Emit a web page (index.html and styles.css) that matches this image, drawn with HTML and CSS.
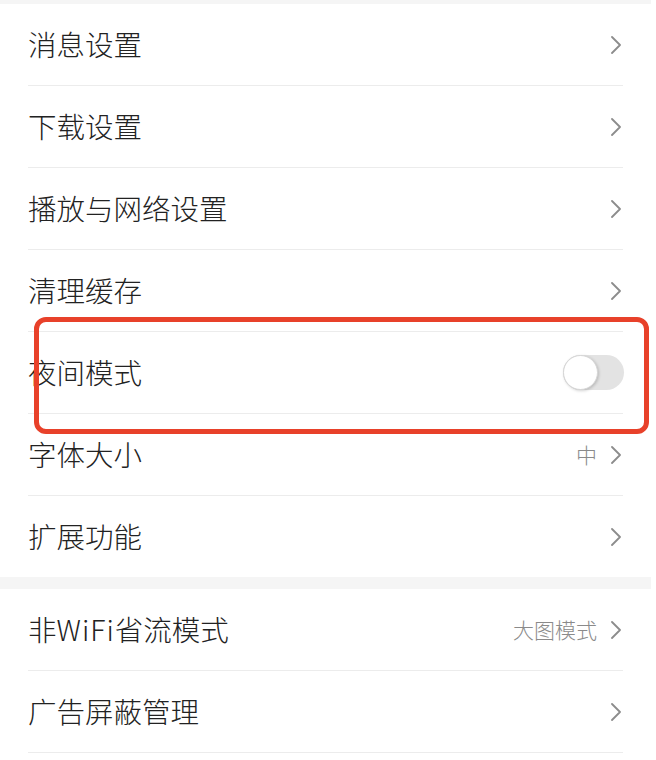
FILE: index.html
```html
<!DOCTYPE html>
<html lang="zh-CN">
<head>
<meta charset="utf-8">
<title>设置</title>
<link rel="stylesheet" href="styles.css">
</head>
<body>
<div class="page">
  <div class="gap gap-top"></div>
  <section class="group">
    <div class="row"><span class="label">消息设置</span><span class="right"><svg class="chev" viewBox="0 0 10 18"><path d="M1 1 L9 9 L1 17"/></svg></span></div>
    <div class="row"><span class="label">下载设置</span><span class="right"><svg class="chev" viewBox="0 0 10 18"><path d="M1 1 L9 9 L1 17"/></svg></span></div>
    <div class="row"><span class="label">播放与网络设置</span><span class="right"><svg class="chev" viewBox="0 0 10 18"><path d="M1 1 L9 9 L1 17"/></svg></span></div>
    <div class="row"><span class="label">清理缓存</span><span class="right"><svg class="chev" viewBox="0 0 10 18"><path d="M1 1 L9 9 L1 17"/></svg></span></div>
    <div class="row"><span class="label">夜间模式</span><span class="right"><span class="toggle"><span class="knob"></span></span></span><div class="highlight"></div></div>
    <div class="row"><span class="label">字体大小</span><span class="right"><span class="value">中</span><svg class="chev" viewBox="0 0 10 18"><path d="M1 1 L9 9 L1 17"/></svg></span></div>
    <div class="row row-last"><span class="label">扩展功能</span><span class="right"><svg class="chev" viewBox="0 0 10 18"><path d="M1 1 L9 9 L1 17"/></svg></span></div>
  </section>
  <div class="gap gap-mid"></div>
  <section class="group">
    <div class="row"><span class="label">非<span class="latin">WiFi</span>省流模式</span><span class="right"><span class="value">大图模式</span><svg class="chev" viewBox="0 0 10 18"><path d="M1 1 L9 9 L1 17"/></svg></span></div>
    <div class="row"><span class="label">广告屏蔽管理</span><span class="right"><svg class="chev" viewBox="0 0 10 18"><path d="M1 1 L9 9 L1 17"/></svg></span></div>
  </section>
</div>
</body>
</html>
```

FILE: styles.css
```css
html, body {
  margin: 0;
  padding: 0;
  background: #ffffff;
}

body {
  font-family: "Noto Sans CJK SC", "Noto Sans", "Liberation Sans", sans-serif;
  color: #222222;
  overflow: hidden;
  height: 760px;
}

.page {
  width: 651px;
  background: #ffffff;
}

.gap {
  background: #f5f5f5;
}

.gap-top {
  height: 4px;
}

.gap-mid {
  height: 12px;
}

.group {
  display: flex;
  flex-direction: column;
}

.row {
  position: relative;
  height: 81px;
  margin: 0 28px;
  display: flex;
  align-items: center;
  justify-content: space-between;
  border-bottom: 1px solid #ececec;
}

.row-last {
  border-bottom: none;
}

.label {
  font-size: 28.5px;
  font-weight: 300;
  line-height: 1;
  color: #222222;
}

.latin {
  letter-spacing: 1px;
}

.right {
  display: flex;
  align-items: center;
  gap: 14px;
  margin-right: 2px;
}

.value {
  font-size: 21px;
  font-weight: 300;
  color: #8a8a8a;
  line-height: 1;
}

.chev {
  width: 10px;
  height: 18px;
  display: block;
}

.chev path {
  fill: none;
  stroke: #8c8c8c;
  stroke-width: 1.8;
  stroke-linecap: round;
  stroke-linejoin: round;
}

.toggle {
  position: relative;
  width: 61px;
  height: 35px;
  border-radius: 18px;
  background: #e3e3e3;
  display: block;
  margin-right: -3px;
}

.knob {
  position: absolute;
  left: 0;
  top: 0;
  width: 35px;
  height: 35px;
  box-sizing: border-box;
  border-radius: 50%;
  background: #ffffff;
  border: 1px solid #d6d6d6;
  box-shadow: 1px 1px 3px rgba(0, 0, 0, 0.18);
}

.highlight {
  position: absolute;
  left: 6px;
  top: -15px;
  width: 615px;
  height: 117px;
  box-sizing: border-box;
  border: 5px solid #e8412a;
  border-radius: 12px;
  pointer-events: none;
}
```
